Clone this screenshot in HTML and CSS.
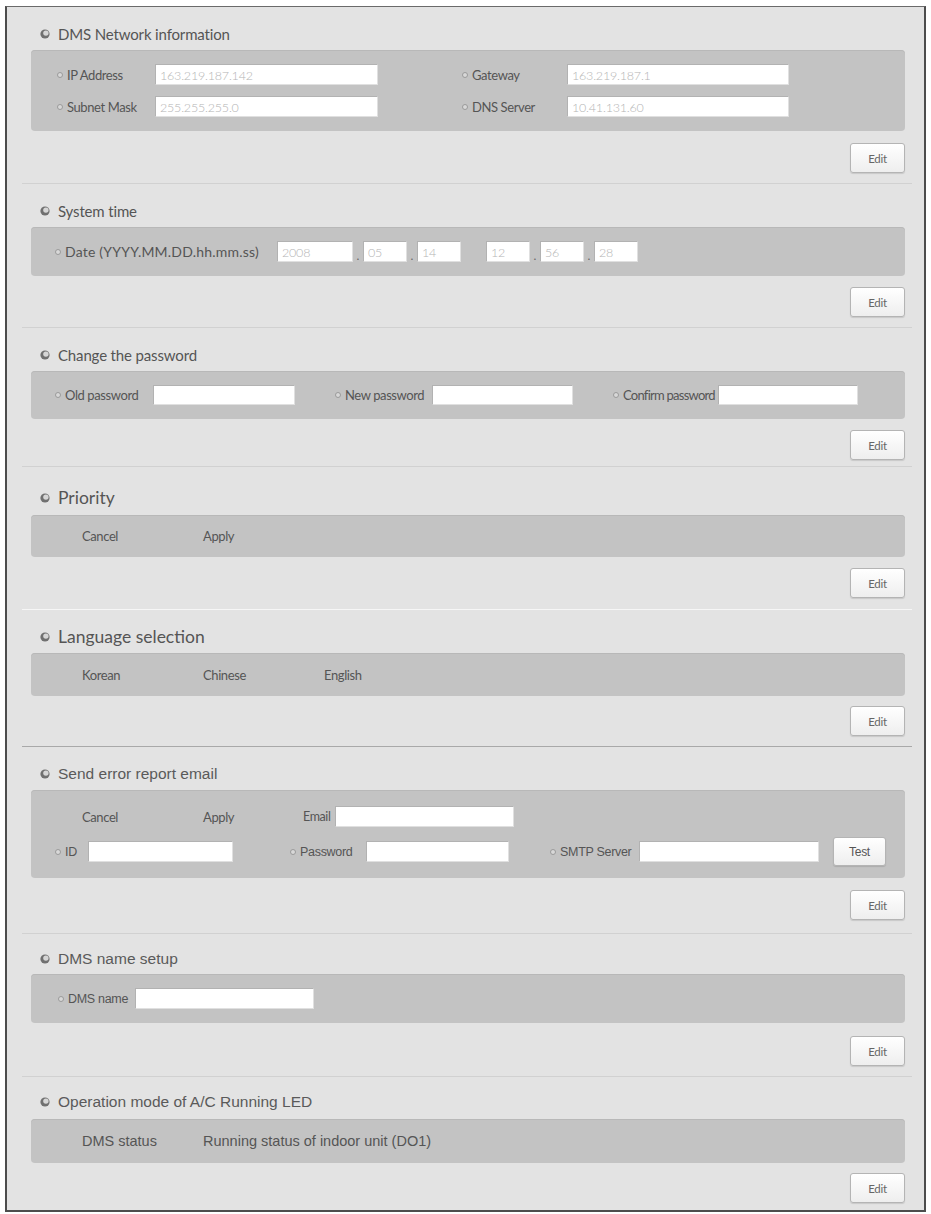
FILE: index.html
```html
<!DOCTYPE html>
<html>
<head>
<meta charset="utf-8">
<title>DMS settings</title>
<link rel="stylesheet" href="styles.css">
</head>
<body>
<div class="frame">

  <section class="sec s1">
    <h2 class="ttl"><svg class="ico" viewBox="0 0 10 10"><circle cx="5" cy="5" r="4.6" fill="#707070"/><circle cx="5.9" cy="4.1" r="2.7" fill="#d6d6d6"/></svg>DMS Network information</h2>
    <div class="panel p-net">
      <div class="grid g-net">
        <span class="lbl"><i class="dot"></i>IP Address</span><span class="inp">163.219.187.142</span><span></span>
        <span class="lbl"><i class="dot"></i>Gateway</span><span class="inp">163.219.187.1</span>
      </div>
      <div class="grid g-net">
        <span class="lbl"><i class="dot"></i>Subnet Mask</span><span class="inp">255.255.255.0</span><span></span>
        <span class="lbl"><i class="dot"></i>DNS Server</span><span class="inp">10.41.131.60</span>
      </div>
    </div>
    <div class="act"><span class="btn">Edit</span></div>
  </section>

  <section class="sec s2">
    <h2 class="ttl"><svg class="ico" viewBox="0 0 10 10"><circle cx="5" cy="5" r="4.6" fill="#707070"/><circle cx="5.9" cy="4.1" r="2.7" fill="#d6d6d6"/></svg>System time</h2>
    <div class="panel p-time">
      <div class="line">
        <span class="lbl lbl-date"><i class="dot"></i>Date (YYYY.MM.DD.hh.mm.ss)</span>
        <span class="inp i-year">2008</span><span class="sepc">.</span>
        <span class="inp i-sm">05</span><span class="sepc">.</span>
        <span class="inp i-sm">14</span><span class="gap-sp"></span>
        <span class="inp i-sm">12</span><span class="sepc">.</span>
        <span class="inp i-sm">56</span><span class="sepc">.</span>
        <span class="inp i-sm">28</span>
      </div>
    </div>
    <div class="act"><span class="btn">Edit</span></div>
  </section>

  <section class="sec s3">
    <h2 class="ttl"><svg class="ico" viewBox="0 0 10 10"><circle cx="5" cy="5" r="4.6" fill="#707070"/><circle cx="5.9" cy="4.1" r="2.7" fill="#d6d6d6"/></svg>Change the password</h2>
    <div class="panel p-pw">
      <div class="grid g-pw">
        <span class="lbl"><i class="dot"></i>Old password</span><span class="inp"></span><span></span>
        <span class="lbl"><i class="dot"></i>New password</span><span class="inp"></span><span></span>
        <span class="lbl lbl-tight"><i class="dot"></i>Confirm password</span><span class="inp"></span>
      </div>
    </div>
    <div class="act"><span class="btn">Edit</span></div>
  </section>

  <section class="sec s4">
    <h2 class="ttl ttl-lg"><svg class="ico" viewBox="0 0 10 10"><circle cx="5" cy="5" r="4.6" fill="#707070"/><circle cx="5.9" cy="4.1" r="2.7" fill="#d6d6d6"/></svg>Priority</h2>
    <div class="panel p-opt p-prio">
      <span class="opt">Cancel</span><span class="opt">Apply</span>
    </div>
    <div class="act"><span class="btn">Edit</span></div>
  </section>

  <section class="sec s5">
    <h2 class="ttl ttl-lg"><svg class="ico" viewBox="0 0 10 10"><circle cx="5" cy="5" r="4.6" fill="#707070"/><circle cx="5.9" cy="4.1" r="2.7" fill="#d6d6d6"/></svg>Language selection</h2>
    <div class="panel p-opt p-lang">
      <span class="opt">Korean</span><span class="opt">Chinese</span><span class="opt">English</span>
    </div>
    <div class="act"><span class="btn">Edit</span></div>
  </section>

  <section class="sec s6">
    <h2 class="ttl ttl-arial"><svg class="ico" viewBox="0 0 10 10"><circle cx="5" cy="5" r="4.6" fill="#707070"/><circle cx="5.9" cy="4.1" r="2.7" fill="#d6d6d6"/></svg>Send error report email</h2>
    <div class="panel p-mail">
      <div class="grid g-mail1">
        <span class="opt">Cancel</span><span class="opt">Apply</span>
        <span class="lbl">Email</span><span class="inp"></span>
      </div>
      <div class="grid g-mail2">
        <span class="lbl lbl-arial"><i class="dot"></i>ID</span><span class="inp"></span><span></span>
        <span class="lbl lbl-arial"><i class="dot"></i>Password</span><span class="inp"></span><span></span>
        <span class="lbl lbl-arial"><i class="dot"></i>SMTP Server</span><span class="inp"></span><span></span>
        <span class="btn btn-test">Test</span>
      </div>
    </div>
    <div class="act"><span class="btn">Edit</span></div>
  </section>

  <section class="sec s7">
    <h2 class="ttl ttl-arial"><svg class="ico" viewBox="0 0 10 10"><circle cx="5" cy="5" r="4.6" fill="#707070"/><circle cx="5.9" cy="4.1" r="2.7" fill="#d6d6d6"/></svg>DMS name setup</h2>
    <div class="panel p-name">
      <div class="grid g-name">
        <span class="lbl lbl-arial"><i class="dot"></i>DMS name</span><span class="inp"></span>
      </div>
    </div>
    <div class="act"><span class="btn">Edit</span></div>
  </section>

  <section class="sec s8">
    <h2 class="ttl ttl-arial"><svg class="ico" viewBox="0 0 10 10"><circle cx="5" cy="5" r="4.6" fill="#707070"/><circle cx="5.9" cy="4.1" r="2.7" fill="#d6d6d6"/></svg>Operation mode of A/C Running LED</h2>
    <div class="panel p-opt p-led">
      <span class="opt opt-arial">DMS status</span><span class="opt opt-arial">Running status of indoor unit (DO1)</span>
    </div>
    <div class="act"><span class="btn">Edit</span></div>
  </section>

</div>
</body>
</html>
```

FILE: styles.css
```css
html, body {
  margin: 0;
  padding: 0;
  background: #ffffff;
}
body {
  font-family: Lato, "Liberation Sans", sans-serif;
  color: #555;
}
.frame {
  margin: 6px 5px 0 5px;
  height: 1206px;
  box-sizing: border-box;
  border: 2px solid #4d4d4d;
  border-top: 1px solid #6a6a6a;
  background: #e3e3e3;
  overflow: hidden;
}
.sec {
  margin: 0 12px 0 15px;
  padding: 18px 7px 10px 9px;
  border-bottom: 1px solid #d1d1d1;
}
.ttl {
  margin: 0 0 7px 0;
  height: 18px;
  line-height: 18px;
  padding-left: 9px;
  display: flex;
  align-items: center;
  gap: 8px;
  font-size: 15px;
  font-weight: normal;
  color: #555;
  letter-spacing: -0.15px;
  white-space: nowrap;
}
.ttl-lg { font-size: 17.5px; letter-spacing: 0; }
.ttl-arial {
  font-family: "Liberation Sans", Arial, sans-serif;
  font-size: 15.5px;
  letter-spacing: 0;
  color: #5a5a5a;
}
.ico { width: 10px; height: 10px; flex: none; }

.panel {
  background: #c3c3c3;
  border-radius: 4px;
  box-shadow: inset 0 1px 0 #b8b8b8;
  box-sizing: border-box;
}
.grid { display: grid; align-items: center; }
.line { display: flex; align-items: center; }

.lbl {
  display: flex;
  align-items: center;
  font-size: 13px;
  letter-spacing: -0.4px;
  color: #555;
  white-space: nowrap;
}
.lbl-tight { letter-spacing: -0.75px; }
.lbl-arial {
  font-family: "Liberation Sans", Arial, sans-serif;
  font-size: 12.5px;
  letter-spacing: -0.3px;
}
.dot {
  width: 4px;
  height: 4px;
  border-radius: 50%;
  border: 1px solid #9a9a9a;
  background: #d8d8d8;
  margin-right: 4px;
  flex: none;
}
.inp {
  display: block;
  height: 21px;
  line-height: 21px;
  box-sizing: border-box;
  background: #ffffff;
  border: 1px solid #b2b2b2;
  border-right-color: #e0e0e0;
  border-bottom-color: #e0e0e0;
  padding-left: 4px;
  font-size: 12.5px;
  font-weight: 300;
  color: #b4b4b4;
  letter-spacing: -0.2px;
  white-space: nowrap;
  overflow: hidden;
}

.act { display: flex; justify-content: flex-end; margin-top: 12px; }
.btn {
  display: flex;
  align-items: center;
  justify-content: center;
  width: 55px;
  height: 30px;
  box-sizing: border-box;
  border: 1px solid #b4b4b4;
  border-radius: 3px;
  background: linear-gradient(#ffffff, #eeeeee);
  box-shadow: 0 1px 1px rgba(0,0,0,0.12);
  font-size: 11.5px;
  color: #666;
  letter-spacing: -0.3px;
}
.btn-test {
  width: 53px;
  height: 29px;
  font-family: "Liberation Sans", Arial, sans-serif;
  font-size: 12px;
  color: #555;
}

/* Network panel */
.p-net { padding: 14px 0 14px 26px; display: flex; flex-direction: column; gap: 11px; }
.g-net { grid-template-columns: 98px 223px 84px 105px 222px; }

/* Time panel */
.p-time { padding: 14px 0 14px 24px; }
.lbl-date { width: 222px; font-size: 14px; letter-spacing: 0.2px; }
.i-year { width: 76px; }
.i-sm { width: 44px; }
.sepc {
  width: 10px;
  text-align: center;
  font-size: 12px;
  line-height: 12px;
  align-self: flex-end;
  color: #666;
}
.gap-sp { width: 25px; }

/* Password panel */
.p-pw { padding: 14px 0 14px 24px; }
.g-pw { grid-template-columns: 98px 142px 40px 97px 141px 40px 105px 140px; }
.g-pw .inp { height: 20px; }

/* Option panels */
.p-opt { display: flex; align-items: center; padding-left: 51px; }
.opt {
  width: 121px;
  flex: none;
  font-size: 13px;
  letter-spacing: -0.4px;
  color: #555;
  white-space: nowrap;
}
.opt-arial {
  font-family: "Liberation Sans", Arial, sans-serif;
  font-size: 14.5px;
  letter-spacing: 0;
}
.p-prio { height: 42px; }
.p-lang { height: 43px; }
.p-led { height: 44px; }

/* Mail panel */
.p-mail { padding: 16px 0 12px 0; display: flex; flex-direction: column; gap: 10px; }
.g-mail1 { grid-template-columns: 121px 100px 32px 179px; padding-left: 51px; }
.g-mail2 { grid-template-columns: 33px 145px 57px 76px 143px 41px 89px 180px 14px 53px; padding-left: 24px; }
.g-mail1 .opt { width: auto; }
.g-mail1 .lbl { font-size: 12.5px; }

/* Name panel */
.p-name { padding: 14px 0 14px 27px; }
.g-name { grid-template-columns: 77px 179px; }

/* Section spacing tweaks */
.s2 .act { margin-top: 11px; }
.s3 .act { margin-top: 11px; }
.s3 { padding-bottom: 6px; }
.s4 { padding-top: 22px; padding-bottom: 11px; border-bottom-color: #f6f6f6; }
.s4 .ttl { margin-bottom: 8px; }
.s4 .act { margin-top: 11px; }
.s5 .act { margin-top: 10px; }
.s5 { border-bottom-color: #a9a9a9; }
.s6 { padding-bottom: 13px; }
.s7 { padding-top: 16px; }
.s7 .ttl { margin-bottom: 6px; }
.s7 .act { margin-top: 13px; }
.s8 { padding-top: 16px; border-bottom: none; }
.s8 .ttl { margin-bottom: 8px; }
.s8 .act { margin-top: 10px; }
```
